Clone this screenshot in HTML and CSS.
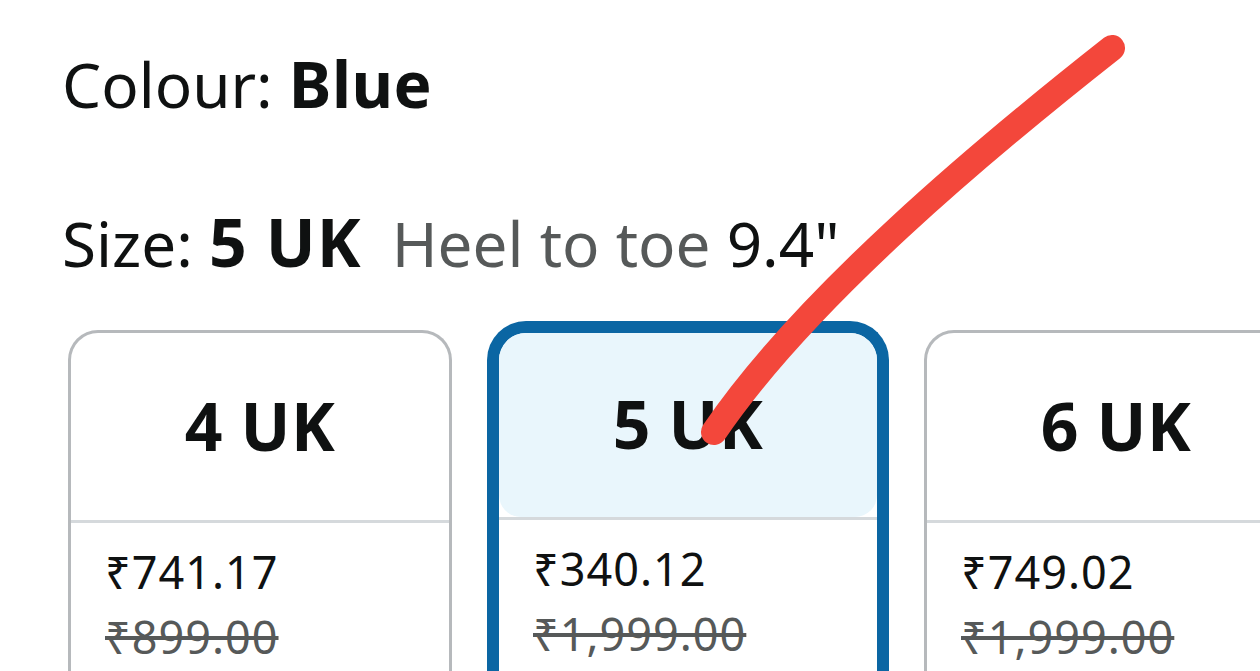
FILE: index.html
```html
<!DOCTYPE html>
<html lang="en">

<head>
    <meta charset="UTF-8">
    <meta name="viewport" content="width=device-width, initial-scale=1.0">
    <title>Size options</title>
    <link rel="stylesheet" href="styles.css">
</head>

<body>
    <div id="variation">
        <div class="option-line">Colour: <b>Blue</b></div>
        <div class="option-line size-line">Size: <b>5 UK</b> <span class="fit-note">Heel to toe <span class="fit-value">9.4"</span></span></div>

        <div class="size-list">
            <div class="size-card">
                <div class="size-name">4 UK</div>
                <div class="size-price">
                    <div class="price-now">₹741.17</div>
                    <div class="price-was">₹899.00</div>
                </div>
            </div>
            <div class="size-card selected">
                <div class="size-name">5 UK</div>
                <div class="size-price">
                    <div class="price-now">₹340.12</div>
                    <div class="price-was">₹1,999.00</div>
                </div>
            </div>
            <div class="size-card">
                <div class="size-name">6 UK</div>
                <div class="size-price">
                    <div class="price-now">₹749.02</div>
                    <div class="price-was">₹1,999.00</div>
                </div>
            </div>
        </div>
    </div>

    <!-- hand drawn marker stroke -->
    <svg class="scribble" width="1260" height="671" viewBox="0 0 1260 671">
        <path d="M1112 48 C 985 148, 805 298, 714 432" fill="none" stroke="#f3473b" stroke-width="26" stroke-linecap="round" />
    </svg>
</body>

</html>
```

FILE: styles.css
```css
/* General Styles */
body {
    font-family: 'Noto Sans', 'DejaVu Sans', sans-serif;
    background-color: #fff;
    color: #0f1111;
    margin: 0;
    padding: 0;
    width: 1260px;
    height: 671px;
    overflow: hidden;
    position: relative;
}

#variation {
    padding: 44px 0 0 62px;
}

/* Selected option lines */
.option-line {
    font-size: 62px;
    line-height: 80px;
    white-space: nowrap;
}

.option-line b {
    font-size: 64px;
    letter-spacing: 0.5px;
}

.size-line {
    margin-top: 77px;
}

.size-line b {
    font-size: 66px;
    letter-spacing: 1px;
}

.fit-note {
    color: #565959;
    margin-left: 14px;
}

.fit-value {
    color: #0f1111;
}

/* Size tiles - list runs on below the fold */
.size-list {
    display: flex;
    gap: 44px;
    margin: 47px 0 0 6px;
}

.size-card {
    flex: 0 0 384px;
    height: 343px;
    box-sizing: border-box;
    border: 3px solid #b6b9bc;
    border-bottom: 0;
    border-radius: 30px 30px 0 0;
    overflow: hidden;
    background-color: #fff;
}

.size-name {
    height: 187px;
    display: flex;
    align-items: center;
    justify-content: center;
    font-size: 66px;
    font-weight: 700;
    letter-spacing: 0.5px;
    padding-bottom: 4px;
    box-sizing: border-box;
}

.size-price {
    border-top: 3px solid #d5d9dc;
    padding: 16px 0 0 34px;
    font-size: 45px;
    line-height: 65px;
    letter-spacing: 1px;
}

.price-was {
    color: #565959;
    text-decoration: line-through;
}

.size-card.selected {
    flex-basis: 402px;
    height: 352px;
    margin: -9px -9px 0;
    border: 12px solid #0b66a3;
    border-bottom: 0;
    border-radius: 39px 39px 0 0;
}

.selected .size-name {
    background-color: #e9f6fc;
    border-radius: 0 0 22px 22px;
    margin-bottom: 3px;
    height: 184px;
}

.selected .size-price {
    margin-top: -3px;
}

/* Marker overlay */
.scribble {
    position: absolute;
    top: 0;
    left: 0;
    pointer-events: none;
}
```
